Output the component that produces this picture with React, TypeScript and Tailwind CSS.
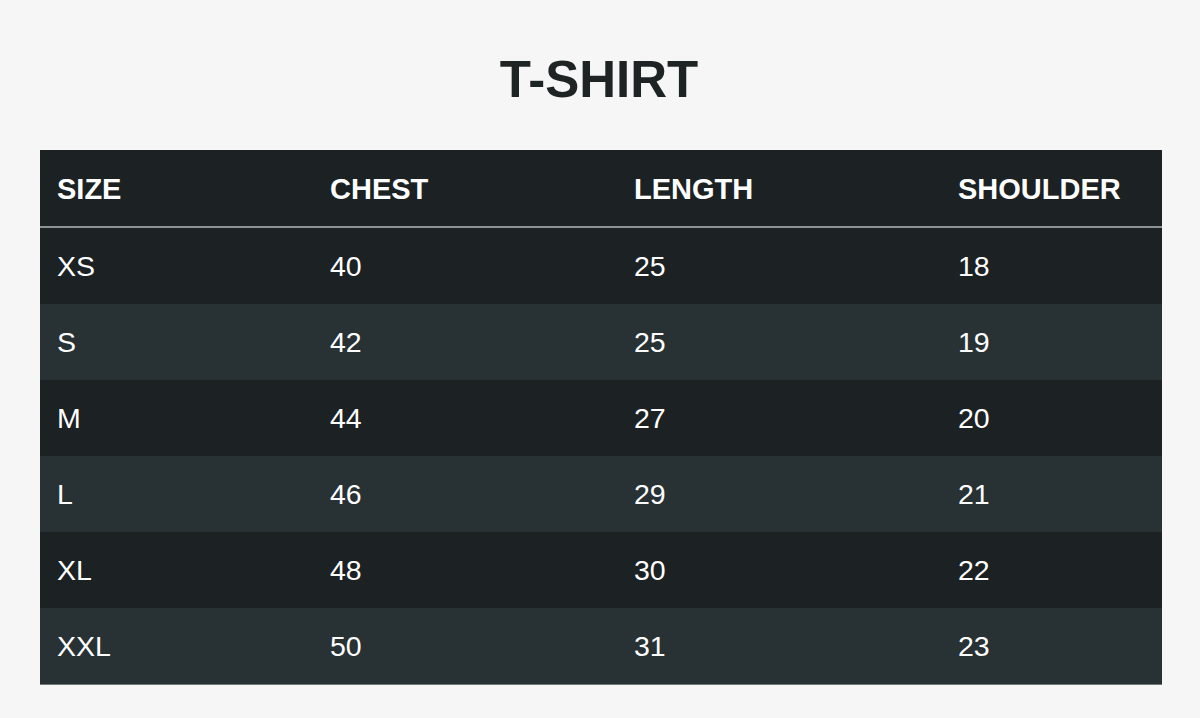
import React from "react";

const rows = [
  ["XS", "40", "25", "18"],
  ["S", "42", "25", "19"],
  ["M", "44", "27", "20"],
  ["L", "46", "29", "21"],
  ["XL", "48", "30", "22"],
  ["XXL", "50", "31", "23"],
];

const cols = "grid grid-cols-[273px_304px_324px_1fr] px-[17px]";

export default function App() {
  return (
    <div
      className="w-[1200px] h-[718px] bg-[#f6f6f6] flex flex-col items-center"
      style={{ fontFamily: '"Liberation Sans", Arial, sans-serif' }}
    >
      <h1 className="mt-[54px] ml-[-2px] text-[51px] leading-[51px] font-bold text-[#1e2324]">
        T-SHIRT
      </h1>
      <div className="mt-[45px] ml-[2px] w-[1122px] flex flex-col border-b border-[#6f7677]">
        <div className={`${cols} h-[76px] items-center pt-[4px] bg-[#1c2123] text-white text-[29px] font-bold`}>
          <div>SIZE</div>
          <div>CHEST</div>
          <div>LENGTH</div>
          <div>SHOULDER</div>
        </div>
        <div className="h-[2px] bg-[#8c9394]" />
        {rows.map((r, i) => (
          <div
            key={r[0]}
            className={`${cols} h-[76px] items-center text-white text-[28.5px] ${
              i % 2 === 0 ? "bg-[#1c2123]" : "bg-[#283133]"
            }`}
          >
            {r.map((c, j) => (
              <div key={j}>{c}</div>
            ))}
          </div>
        ))}
      </div>
    </div>
  );
}
